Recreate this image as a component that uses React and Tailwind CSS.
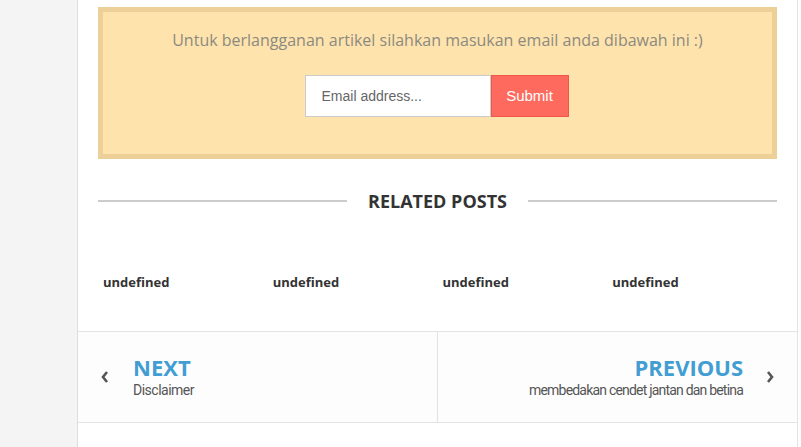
export default function App() {
  const related = ['undefined', 'undefined', 'undefined', 'undefined'];

  return (
    <div className="flex w-[801px] h-[447px] overflow-hidden bg-white" style={{ fontFamily: '"Open Sans", sans-serif' }}>
      {/* left gutter */}
      <div className="w-[78px] shrink-0 bg-[#f4f4f4] border-r border-[#dddddd]" />

      {/* main column */}
      <div className="w-[720px] shrink-0 bg-white border-r border-[#e3e3e3] flex flex-col">

        {/* subscribe box */}
        <div className="px-5 pt-[7px]">
          <div className="h-[152px] bg-[#fee3ad] border-[5px] border-[#ecd098] flex flex-col items-center">
            <p className="mt-[16px] text-[16px] leading-[24px] text-[#8c8a80]">
              Untuk berlangganan artikel silahkan masukan email anda dibawah ini :)
            </p>
            <div className="flex mt-[23px] mr-[2px]" style={{ fontFamily: '"Liberation Sans", Arial, sans-serif' }}>
              <input
                placeholder="Email address..."
                className="w-[186px] h-[42px] bg-white border border-[#cccccc] px-4 text-[14px] text-[#555] placeholder:text-[#666] outline-none"
              />
              <button className="w-[78px] h-[42px] bg-[#ff6a5e] border border-[#f0574c] text-white text-[15px]">
                Submit
              </button>
            </div>
          </div>
        </div>

        {/* related posts */}
        <div className="px-5 mt-[27px] flex items-center">
          <div className="flex-1 h-[2px] bg-[#cccccc]" />
          <h3 className="px-[21px] text-[18px] leading-[30px] font-bold text-[#333]">RELATED POSTS</h3>
          <div className="flex-1 h-[2px] bg-[#cccccc]" />
        </div>

        <div className="px-5 mt-[57px] grid grid-cols-4">
          {related.map((t, i) => (
            <p key={i} className="px-[5px] text-[13px] leading-[18px] font-bold text-[#333]">{t}</p>
          ))}
        </div>

        {/* pager */}
        <div className="mt-[40px] h-[92px] flex border-y border-[#e3e3e3] bg-[#fdfdfd]">
          <div className="w-[360px] border-r border-[#e3e3e3] flex items-center pl-[22px]">
            <svg width="10" height="14" viewBox="0 0 10 14">
              <path d="M7 2 L3 7 L7 12" fill="none" stroke="#555" strokeWidth="2.6" />
            </svg>
            <div className="ml-[23px] -mt-[1px]">
              <p className="text-[22px] leading-[26px] font-bold text-[#429dd3]">NEXT</p>
              <p className="mt-[1px] text-[14px] leading-[18px] text-[#555] tracking-[-0.5px]" style={{ fontFamily: 'Roboto, sans-serif' }}>Disclaimer</p>
            </div>
          </div>
          <div className="flex-1 flex items-center justify-end pr-[22px]">
            <div className="text-right -mt-[1px]">
              <p className="text-[22px] leading-[26px] font-bold text-[#429dd3]">PREVIOUS</p>
              <p className="mt-[1px] text-[14px] leading-[18px] text-[#555] tracking-[-0.8px]" style={{ fontFamily: 'Roboto, sans-serif' }}>membedakan cendet jantan dan betina</p>
            </div>
            <svg width="10" height="14" viewBox="0 0 10 14" className="ml-[22px]">
              <path d="M3 2 L7 7 L3 12" fill="none" stroke="#555" strokeWidth="2.6" />
            </svg>
          </div>
        </div>
      </div>

      <div className="flex-1 bg-white" />
    </div>
  );
}
